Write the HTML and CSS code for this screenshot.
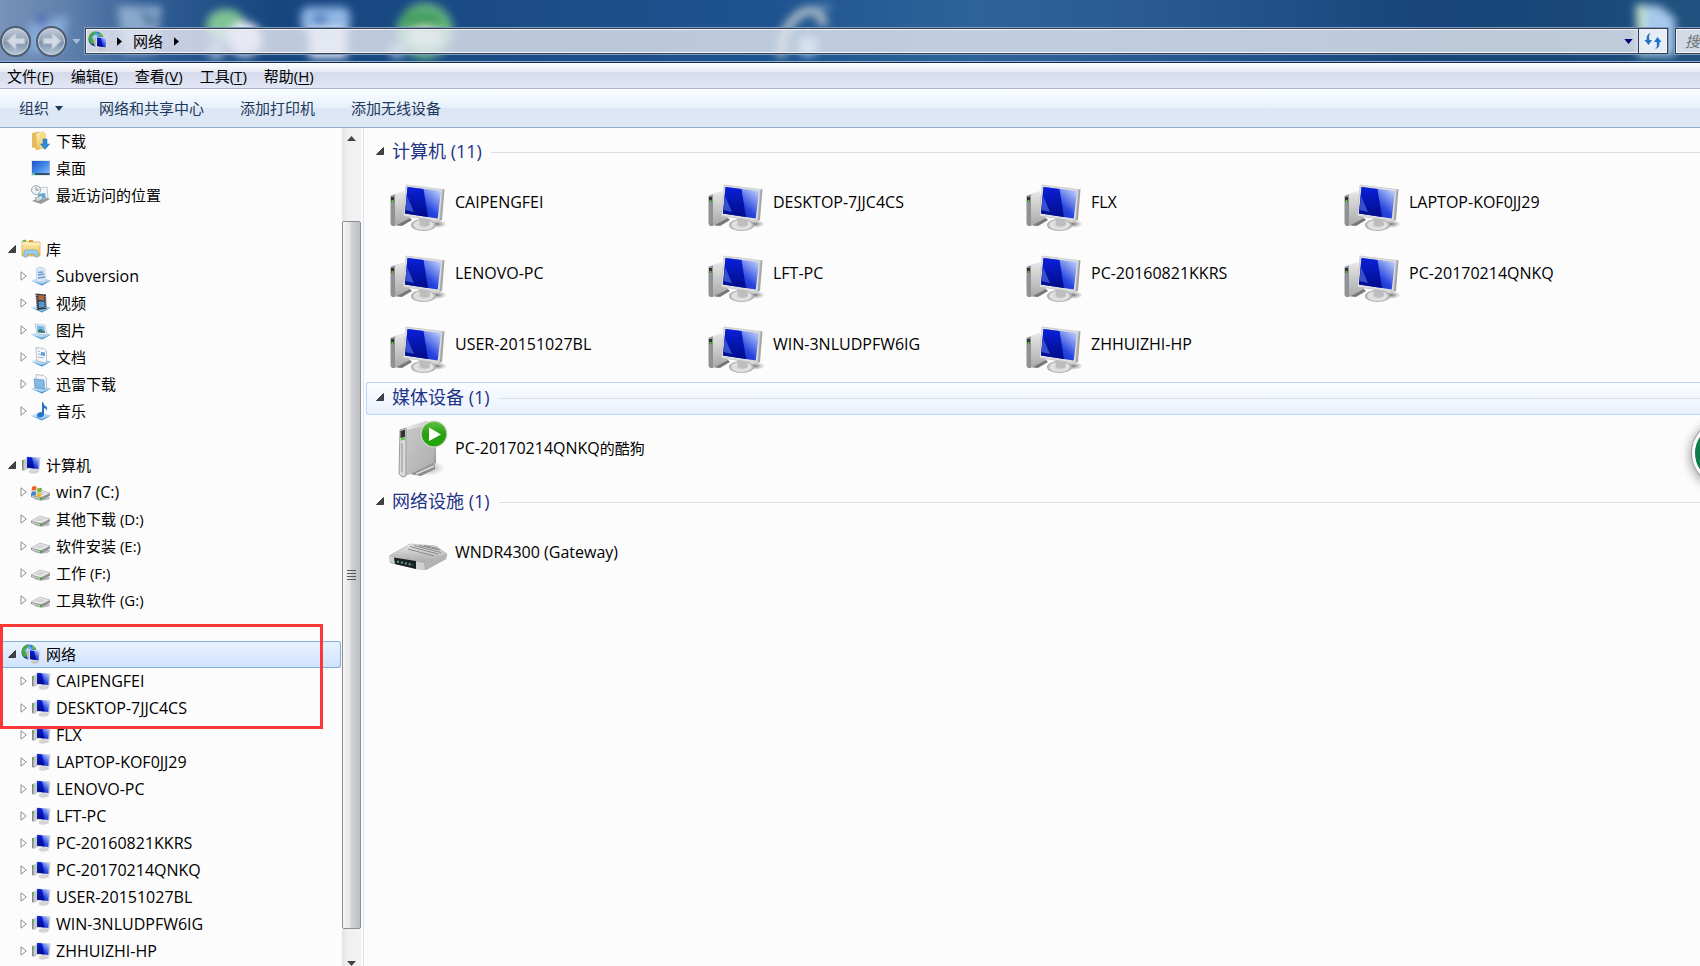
FILE: index.html
```html
<!DOCTYPE html>
<html lang="zh-CN">
<head>
<meta charset="utf-8">
<title>网络</title>
<link rel="stylesheet" href="styles.css">
</head>
<body>
<svg class="defs" aria-hidden="true">
  <defs>
    <linearGradient id="gScreen" x1="0" y1="1" x2="1" y2="0"><stop offset="0" stop-color="#0008a0"/><stop offset=".5" stop-color="#2a48e0"/><stop offset="1" stop-color="#d8e6ff"/></linearGradient>
    <linearGradient id="gDark" x1="0" y1="0" x2="0" y2="1"><stop offset="0" stop-color="#0a20d8"/><stop offset="1" stop-color="#000c88"/></linearGradient>
    <linearGradient id="gMetal" x1="0" y1="0" x2="1" y2="1"><stop offset="0" stop-color="#f4f4f4"/><stop offset="1" stop-color="#8e8e8e"/></linearGradient>
    <linearGradient id="gTower" x1="0" y1="0" x2="0" y2="1"><stop offset="0" stop-color="#e8e8e8"/><stop offset="1" stop-color="#a8a8a8"/></linearGradient>
    <radialGradient id="gStand"><stop offset="0" stop-color="#c8c8c8"/><stop offset=".7" stop-color="#e6e6e6"/><stop offset="1" stop-color="#a0a0a0"/></radialGradient>
    <radialGradient id="gShadow"><stop offset="0" stop-color="#777"/><stop offset="1" stop-color="#999" stop-opacity="0"/></radialGradient>
    <radialGradient id="gGlobe" cx=".4" cy=".35"><stop offset="0" stop-color="#bfe4ff"/><stop offset=".6" stop-color="#3d8ede"/><stop offset="1" stop-color="#1c4f9c"/></radialGradient>
    <linearGradient id="gGreen" x1="0" y1="0" x2="0" y2="1"><stop offset="0" stop-color="#5cc43c"/><stop offset=".5" stop-color="#2a9e12"/><stop offset="1" stop-color="#1fa808"/></linearGradient>
    <linearGradient id="gFolder" x1="0" y1="0" x2="0" y2="1"><stop offset="0" stop-color="#fdf0b8"/><stop offset="1" stop-color="#e8bf58"/></linearGradient>
    <linearGradient id="gDesk" x1="0" y1="0" x2="1" y2="1"><stop offset="0" stop-color="#1f52c4"/><stop offset=".5" stop-color="#3f86e8"/><stop offset="1" stop-color="#8cc0f6"/></linearGradient>
    <linearGradient id="gTray" x1="0" y1="0" x2="1" y2="1"><stop offset="0" stop-color="#e6f4fd"/><stop offset="1" stop-color="#86bde8"/></linearGradient>

    <symbol id="pc" viewBox="0 0 60 60">
      <ellipse cx="49" cy="52" rx="10" ry="4" fill="url(#gShadow)"/>
      <path d="M3 23 16 19 22 47 12 54 4 53z" fill="url(#gTower)"/>
      <path d="M2.500 24 7 22.500 7 54 4 54 2.500 52z" fill="#8f9196"/>
      <path d="M3 25h3v5h-3z" fill="#333"/><path d="M3.500 28h2v2h-2z" fill="#61c83a"/>
      <path d="M9 53 22 46 24 48 14 54z" fill="#777"/>
      <ellipse cx="35.500" cy="53" rx="12.500" ry="6" fill="url(#gStand)"/>
      <path d="M31 45h10l1 8q-5 3-10 0z" fill="#bdbdbd"/>
      <path d="M53 18 56.500 17 54 48 50.500 49z" fill="#a4a4a4"/>
      <path d="M18 13 54.500 17.500 51.500 49 15.500 44z" fill="#e0e0e0" stroke="#bbb" stroke-width=".6"/>
      <path d="M19.500 15 53 19 49.700 46.500 17 41.500z" fill="url(#gScreen)"/>
      <path d="M19.500 15 35.500 17 40 45 17 41.500z" fill="url(#gDark)"/>
      <path d="M19 24 26 40 17.500 38z" fill="#5a78e8" opacity=".6"/>
    </symbol>
    <symbol id="pcs" viewBox="0 0 20 20">
      <ellipse cx="14" cy="16.500" rx="5" ry="2" fill="url(#gShadow)"/>
      <path d="M1 5 6 3.500 8 13 3 16 1 15z" fill="#c9c9c9"/><path d="M1 5h1.500v10.500L1 15z" fill="#84888c"/><path d="M1 6h1.500v2H1z" fill="#42b432"/>
      <ellipse cx="12" cy="16.500" rx="4.200" ry="2.200" fill="#d5d5d5"/>
      <path d="M5.500 1.500 19.500 2.500 18.500 15 5 13.500z" fill="#c9ccd4"/>
      <path d="M6.300 2 18.300 3 17.300 14 6 12.500z" fill="url(#gScreen)"/>
      <path d="M6.300 2 11 2.500 13.500 13.500 6 12.500z" fill="url(#gDark)"/>
    </symbol>
    <symbol id="net" viewBox="0 0 20 20">
      <circle cx="8" cy="8" r="7.600" fill="url(#gGlobe)"/>
      <path d="M1 5q3-5 6-4.500Q8 3 5 5t1 4-2 4Q0 10 1 5z" fill="#4aa83a"/><path d="M11 1q4 2 4.500 5l-4-1z" fill="#69b94e"/>
      <path d="M5 8 8 7 10 15 7 16z" fill="#bbb"/>
      <ellipse cx="14" cy="18" rx="4" ry="1.800" fill="#c8c8c8"/>
      <path d="M8 5.500 19.500 6.500 18.500 17.500 8 16z" fill="#d8dade"/>
      <path d="M9 6.500 18.500 7.300 17.500 16.500 9 15z" fill="url(#gScreen)"/><path d="M9 6.500 13 7 15 16 9 15z" fill="url(#gDark)"/>
    </symbol>
    <symbol id="download" viewBox="0 0 20 20">
      <path d="M1 2 8 .5 9 18 1 16.500z" fill="#e6bd5c"/><path d="M5 2 13 1V17L5 19z" fill="url(#gFolder)" stroke="#d8ae4c" stroke-width=".5"/><path d="M9 3 15 2V15L9 18z" fill="#f5d784"/>
      <path d="M12 8h4v5h2.500L14 18.500 9.500 13H12z" fill="#2e8ae0" stroke="#1664b4" stroke-width=".5"/>
    </symbol>
    <symbol id="desk" viewBox="0 0 20 20"><path d="M.5 2.500h18.500v15H.5z" fill="#c2d0dc"/><path d="M1 3h17.500v13H1z" fill="url(#gDesk)"/><path d="M1 15h17.500v2H1z" fill="#34506e"/><path d="M1 15h3v2H1z" fill="#4fc0a0"/></symbol>
    <symbol id="recent" viewBox="0 0 20 20">
      <path d="M1 16 12 11 19 14 10 19z" fill="#999"/><path d="M6 3 16 2 17 13 8 15z" fill="#f2f5f8" stroke="#a6acb2" stroke-width=".7"/>
      <path d="M7 9 14 8 15 13 8 14z" fill="#5dacd8"/><path d="M4 13 11 10 12 14 6 17z" fill="#c8dce4" stroke="#777" stroke-width=".5"/>
      <circle cx="5" cy="5" r="4.500" fill="#edf1f5" stroke="#9ba7b3"/><path d="M5 2v3h3" fill="none" stroke="#697684" stroke-width=".8"/>
    </symbol>
    <symbol id="library" viewBox="0 0 20 20">
      <path d="M1 2h5l1 1h12v14H1z" fill="url(#gFolder)" stroke="#d3a94a" stroke-width=".7"/><path d="M2 .8h3v2H2z" fill="#60b848"/><path d="M8 1h4v2H8z" fill="#d99a3c"/><path d="M1 5h18" stroke="#fff3c4"/>
      <path d="M3 18v-4q0-3 3-3h8q3 0 3 3v4h-3v-3H6v3z" fill="#9fd0f2" stroke="#5a9fd4" stroke-width=".6"/>
    </symbol>
    <symbol id="tray" viewBox="0 0 20 20"><path d="M0 14.500 8 11 20 14.500 11 19.500z" fill="url(#gTray)"/><path d="M0 14.500 11 18 20 14.500 11 19.500z" fill="#4d9ad2"/></symbol>
    <symbol id="libdoc" viewBox="0 0 20 20"><use href="#tray"/><path d="M5 5q0-4 4-4 5 0 5 4l1 10-9 1z" fill="#d9e6f6" stroke="#b5c8e0" stroke-width=".6"/><path d="M7 6.500 12 6M7 9l6-1M7 12l7-1" stroke="#6f9bd2" stroke-width="1.300"/></symbol>
    <symbol id="video" viewBox="0 0 20 20"><use href="#tray"/><path d="M4.500.5 15 1.500 15.500 16 6 17z" fill="#35393f"/><path d="M7.500 2 13 2.500V7.500l-5.500-.5z" fill="#b4683a"/><path d="M7.500 8.500 13 8.500 13.500 14 8 15z" fill="#5595d4"/><path d="M5.800 2v14M14.200 3v12" stroke="#d9dde2" stroke-width="1" stroke-dasharray="1 1.200"/></symbol>
    <symbol id="picture" viewBox="0 0 20 20"><use href="#tray"/><path d="M4 4 14 5 16 15 6 14z" fill="#eff5f9" stroke="#9fb4c6" stroke-width=".6"/><path d="M5.500 5.500 13 6.200 14.300 13 7 12.500z" fill="#72b8e8"/><path d="M6.500 10 10 9l4 3v1l-7-.5z" fill="#3c7a78"/></symbol>
    <symbol id="docs" viewBox="0 0 20 20"><use href="#tray"/><path d="M5 .5 13 1.500 15.500 4 15.500 16 6 14z" fill="#f5f8fb" stroke="#9eabba" stroke-width=".7"/><path d="M7 4l2 .5M7 7l3 .5M7 10l6 1" stroke="#9fb2c8"/><path d="M10 5 14 5.500V9l-4-.5z" fill="#5d9fd6"/></symbol>
    <symbol id="thunder" viewBox="0 0 20 20"><use href="#tray"/><path d="M5 .5 13 1.500 15.500 4 15.500 15 5 14z" fill="#f0f4f8" stroke="#9eabba" stroke-width=".7"/><path d="M3 5 13 6 13.500 15 4 14z" fill="#7fb9e4" stroke="#4f8fc4" stroke-width=".6"/></symbol>
    <symbol id="music" viewBox="0 0 20 20"><use href="#tray"/><path d="M12 1q1 4 4 5v4q-1-3-3-3v6.500q-.5 3-4 3T6 14t4-3l1 .2V1z" fill="#2377c6"/></symbol>
    <symbol id="drive" viewBox="0 0 20 20"><ellipse cx="11" cy="15" rx="8" ry="2.500" fill="#bbb"/><path d="M0 12 9 7 19 10 19 12.500 10 17.500 0 14z" fill="#8c8e90"/><path d="M0 12 9 7 19 10 10 14.500z" fill="#eceded" stroke="#a7a7a7" stroke-width=".5"/><path d="M3 11.500 9 8.500l6 1.500-5 2.500z" fill="#d2d4d5"/><path d="M1 12.800 9 15.200V16.500L1 14z" fill="#ccc"/><path d="M9 14.500h2v2.500H9z" fill="#36b82e"/></symbol>
    <symbol id="windrive" viewBox="0 0 20 20"><use href="#drive" y="1"/><path d="M1 5q3-2 4.500 0L5 9Q3 7.500.5 9z" fill="#e8642c"/><path d="M6.500 5.500q2 1.500 4.500 0L10.500 9.500Q8 11 6 9.500z" fill="#72b63c"/><path d="M.5 10q2.500-1.500 4.500 0L4.500 14Q2.500 12.500 0 14z" fill="#3a86d0"/><path d="M6 10.500q2.500 1.500 4.500 0L10 14.500Q8 16 5.500 14.500z" fill="#f3b92c"/></symbol>
    <symbol id="media" viewBox="0 0 60 60">
      <ellipse cx="40" cy="50" rx="17" ry="8" fill="url(#gShadow)" opacity=".7"/>
      <path d="M22 56 44 44 47 47 47 51 33 58z" fill="#8d8d8d"/><path d="M28 56 46 48" stroke="#ddd" stroke-width="1.500"/>
      <path d="M18 9 38 3 48 6 48 45 20 57 16 57z" fill="url(#gMetal)"/>
      <path d="M18 12 48 6 46 44 20 56z" fill="#b9b9b9" opacity=".7"/>
      <path d="M12 12 18 10 18 58 14 59 11 56z" fill="#dadada" stroke="#888" stroke-width=".8"/>
      <path d="M12.500 13 17 11.500V19l-4.500 1z" fill="#333"/><path d="M13 20.500 17 19.500v2l-4 1z" fill="#46cf28"/><path d="M14 25v29" stroke="#909090"/>
      <circle cx="46" cy="16" r="13.500" fill="#d4d4d4"/><circle cx="46" cy="16" r="12.300" fill="url(#gGreen)"/><path d="M41 9.500 53 16.500 41 23z" fill="#fff"/>
    </symbol>
    <symbol id="router" viewBox="0 0 60 60">
      <path d="M1 34 22 22 48 24 59 32 58 37 38 48 28 47 2 41z" fill="#a4a6a8"/>
      <path d="M1 34 22 22 48 24 59 32 36 41z" fill="url(#gTower)" stroke="#bbb" stroke-width=".6"/>
      <path d="M22 24.500 50 32M26 23.500 53 30.500M20 27 46 34M31 23.500 52 28M36 23.500 50 26.500" stroke="#85888a" stroke-width="1"/>
      <path d="M1 34 36 41 37 48 28 47 2 40z" fill="#cfd1d2"/><path d="M36 41 59 32 58 37 38 48z" fill="#b1b3b4"/>
      <path d="M6 35.500 28 39V47L7 42z" fill="#192024"/><path d="M9 39.500 25 43" stroke="#5fa87a" stroke-width="2" stroke-dasharray="2 2"/>
    </symbol>
    <symbol id="open" viewBox="0 0 8 8"><path d="M7.500.5V7.500H.5z" fill="#444" stroke="#222" stroke-width=".8"/></symbol>
    <symbol id="shut" viewBox="0 0 8 10"><path d="M1 .8 6.200 5 1 9.200z" fill="#fff" stroke="#8e8e8e"/></symbol>
  </defs>
</svg>

<header class="titlebar">
  <svg class="wallpaper" aria-hidden="true">
    <defs><filter id="soft" x="-20%" y="-20%" width="140%" height="140%"><feGaussianBlur stdDeviation="4"/></filter></defs>
    <g filter="url(#soft)">
      <path d="M28 24 68 16 62 50 30 54z" fill="#86abd8"/><circle cx="42" cy="21" r="5" fill="#4a57b8"/>
      <path d="M117 6H162L155 54H124z" fill="#8aa9cc"/><path d="M138 10 158 18 150 28z" fill="#4c6f98"/>
      <ellipse cx="226" cy="25" rx="20" ry="16" fill="#7fc394"/><circle cx="245" cy="39" r="17" fill="#e8eefa"/><circle cx="216" cy="51" r="9" fill="#8aa8cc"/>
      <rect x="301" y="7" width="49" height="26" rx="8" fill="#8fb6e4"/><circle cx="320" cy="20" r="7" fill="#4f82bf"/><rect x="309" y="28" width="38" height="30" fill="#e0ebfa"/>
      <circle cx="425" cy="31" r="28" fill="#6ab987"/><ellipse cx="422" cy="20" rx="22" ry="11" fill="#46a062"/><ellipse cx="425" cy="37" rx="17" ry="10" fill="#d4f0d8"/><circle cx="397" cy="51" r="8" fill="#8aa8cc"/>
      <path d="M782 57Q778 32 800 14 820 4 824 26" fill="none" stroke="#a9b9c6" stroke-width="9"/><path d="M815 8 832 6" stroke="#5f88b2" stroke-width="5"/><circle cx="808" cy="46" r="10" fill="#a8d2f0"/>
      <path d="M1636 4 1660 6 1675 18V56H1638z" fill="#a6c9ec"/><path d="M1636 4 1646 6V56H1638z" fill="#c3e0cc"/>
    </g>
  </svg>
  <div class="nav">
    <button class="round" aria-label="后退"><svg viewBox="0 0 20 20"><path d="M10 2 2 10 10 18V12.500H18V7.500H10z"/></svg></button>
    <button class="round" aria-label="前进"><svg viewBox="0 0 20 20"><path d="M10 2 18 10 10 18V12.500H2V7.500H10z"/></svg></button>
    <button class="recent" aria-label="最近的页面"><svg viewBox="0 0 10 6"><path d="M0 0H10L5 6z"/></svg></button>
  </div>
  <div class="address">
    <svg class="icon"><use href="#net"/></svg>
    <svg class="sep" viewBox="0 0 6 10"><path d="M0 0 6 5 0 10z"/></svg>
    <a href="#">网络</a>
    <svg class="sep" viewBox="0 0 6 10"><path d="M0 0 6 5 0 10z"/></svg>
    <button class="history" aria-label="历史记录"><svg viewBox="0 0 10 6"><path d="M0 0H10L5 6z"/></svg></button>
    <button class="refresh" aria-label="刷新"><svg viewBox="0 0 18 18"><path d="M7 1Q4 3 5.500 8H8L4.500 13 .5 8H2.500Q2 2 7 1z"/><path d="M11 17Q14 15 12.500 10H10L13.500 5 17.500 10H15.500Q16 16 11 17z"/></svg></button>
  </div>
  <input class="search" type="text" placeholder="搜" aria-label="搜索">
</header>

<nav class="menubar">
  <button>文件(<u>F</u>)</button><button>编辑(<u>E</u>)</button><button>查看(<u>V</u>)</button><button>工具(<u>T</u>)</button><button>帮助(<u>H</u>)</button>
</nav>
<div class="toolbar">
  <button>组织<svg viewBox="0 0 8 5"><path d="M0 0H8L4 5z"/></svg></button><button>网络和共享中心</button><button>添加打印机</button><button>添加无线设备</button>
</div>

<div class="body">
  <nav class="tree">
    <ul>
      <li class="sub"><a href="#"><svg><use href="#download"/></svg>下载</a></li>
      <li class="sub"><a href="#"><svg><use href="#desk"/></svg>桌面</a></li>
      <li class="sub"><a href="#"><svg><use href="#recent"/></svg>最近访问的位置</a></li>
    </ul>
    <ul>
      <li><button aria-label="折叠"><svg><use href="#open"/></svg></button><a href="#"><svg><use href="#library"/></svg>库</a></li>
      <li class="sub latin"><button aria-label="展开"><svg><use href="#shut"/></svg></button><a href="#"><svg><use href="#libdoc"/></svg>Subversion</a></li>
      <li class="sub"><button aria-label="展开"><svg><use href="#shut"/></svg></button><a href="#"><svg><use href="#video"/></svg>视频</a></li>
      <li class="sub"><button aria-label="展开"><svg><use href="#shut"/></svg></button><a href="#"><svg><use href="#picture"/></svg>图片</a></li>
      <li class="sub"><button aria-label="展开"><svg><use href="#shut"/></svg></button><a href="#"><svg><use href="#docs"/></svg>文档</a></li>
      <li class="sub"><button aria-label="展开"><svg><use href="#shut"/></svg></button><a href="#"><svg><use href="#thunder"/></svg>迅雷下载</a></li>
      <li class="sub"><button aria-label="展开"><svg><use href="#shut"/></svg></button><a href="#"><svg><use href="#music"/></svg>音乐</a></li>
    </ul>
    <ul>
      <li><button aria-label="折叠"><svg><use href="#open"/></svg></button><a href="#"><svg><use href="#pcs"/></svg>计算机</a></li>
      <li class="sub latin"><button aria-label="展开"><svg><use href="#shut"/></svg></button><a href="#"><svg><use href="#windrive"/></svg>win7 (C:)</a></li>
      <li class="sub"><button aria-label="展开"><svg><use href="#shut"/></svg></button><a href="#"><svg><use href="#drive"/></svg>其他下载 (D:)</a></li>
      <li class="sub"><button aria-label="展开"><svg><use href="#shut"/></svg></button><a href="#"><svg><use href="#drive"/></svg>软件安装 (E:)</a></li>
      <li class="sub"><button aria-label="展开"><svg><use href="#shut"/></svg></button><a href="#"><svg><use href="#drive"/></svg>工作 (F:)</a></li>
      <li class="sub"><button aria-label="展开"><svg><use href="#shut"/></svg></button><a href="#"><svg><use href="#drive"/></svg>工具软件 (G:)</a></li>
    </ul>
    <ul class="network">
      <li class="selected"><button aria-label="折叠"><svg><use href="#open"/></svg></button><a href="#"><svg><use href="#net"/></svg>网络</a></li>
      <li class="sub latin"><button aria-label="展开"><svg><use href="#shut"/></svg></button><a href="#"><svg><use href="#pcs"/></svg>CAIPENGFEI</a></li>
      <li class="sub latin"><button aria-label="展开"><svg><use href="#shut"/></svg></button><a href="#"><svg><use href="#pcs"/></svg>DESKTOP-7JJC4CS</a></li>
      <li class="sub latin"><button aria-label="展开"><svg><use href="#shut"/></svg></button><a href="#"><svg><use href="#pcs"/></svg>FLX</a></li>
      <li class="sub latin"><button aria-label="展开"><svg><use href="#shut"/></svg></button><a href="#"><svg><use href="#pcs"/></svg>LAPTOP-KOF0JJ29</a></li>
      <li class="sub latin"><button aria-label="展开"><svg><use href="#shut"/></svg></button><a href="#"><svg><use href="#pcs"/></svg>LENOVO-PC</a></li>
      <li class="sub latin"><button aria-label="展开"><svg><use href="#shut"/></svg></button><a href="#"><svg><use href="#pcs"/></svg>LFT-PC</a></li>
      <li class="sub latin"><button aria-label="展开"><svg><use href="#shut"/></svg></button><a href="#"><svg><use href="#pcs"/></svg>PC-20160821KKRS</a></li>
      <li class="sub latin"><button aria-label="展开"><svg><use href="#shut"/></svg></button><a href="#"><svg><use href="#pcs"/></svg>PC-20170214QNKQ</a></li>
      <li class="sub latin"><button aria-label="展开"><svg><use href="#shut"/></svg></button><a href="#"><svg><use href="#pcs"/></svg>USER-20151027BL</a></li>
      <li class="sub latin"><button aria-label="展开"><svg><use href="#shut"/></svg></button><a href="#"><svg><use href="#pcs"/></svg>WIN-3NLUDPFW6IG</a></li>
      <li class="sub latin"><button aria-label="展开"><svg><use href="#shut"/></svg></button><a href="#"><svg><use href="#pcs"/></svg>ZHHUIZHI-HP</a></li>
      <li class="marker" aria-hidden="true"></li>
    </ul>
  </nav>
  <div class="scrollbar" aria-hidden="true">
    <div class="track"><svg viewBox="0 0 9 5"><path d="M0 5 4.500 0 9 5z"/></svg></div>
    <div class="thumb"><i></i><i></i><i></i><i></i></div>
    <div class="track end"><svg viewBox="0 0 9 5"><path d="M0 0H9L4.500 5z"/></svg></div>
  </div>
  <main>
    <section>
      <h2><button><svg><use href="#open"/></svg>计算机 (11)</button></h2>
      <div class="tiles">
        <a href="#"><svg><use href="#pc"/></svg>CAIPENGFEI</a>
        <a href="#"><svg><use href="#pc"/></svg>DESKTOP-7JJC4CS</a>
        <a href="#"><svg><use href="#pc"/></svg>FLX</a>
        <a href="#"><svg><use href="#pc"/></svg>LAPTOP-KOF0JJ29</a>
        <a href="#"><svg><use href="#pc"/></svg>LENOVO-PC</a>
        <a href="#"><svg><use href="#pc"/></svg>LFT-PC</a>
        <a href="#"><svg><use href="#pc"/></svg>PC-20160821KKRS</a>
        <a href="#"><svg><use href="#pc"/></svg>PC-20170214QNKQ</a>
        <a href="#"><svg><use href="#pc"/></svg>USER-20151027BL</a>
        <a href="#"><svg><use href="#pc"/></svg>WIN-3NLUDPFW6IG</a>
        <a href="#"><svg><use href="#pc"/></svg>ZHHUIZHI-HP</a>
      </div>
    </section>
    <section>
      <h2 class="hover"><button><svg><use href="#open"/></svg>媒体设备 (1)</button></h2>
      <div class="tiles"><a href="#"><svg><use href="#media"/></svg><span>PC-20170214QNKQ<span class="cjk">的酷狗</span></span></a></div>
    </section>
    <section>
      <h2><button><svg><use href="#open"/></svg>网络设施 (1)</button></h2>
      <div class="tiles"><a href="#"><svg><use href="#router"/></svg>WNDR4300 (Gateway)</a></div>
    </section>
  </main>
</div>
<div class="bubble" aria-hidden="true"></div>
</body>
</html>
```

FILE: styles.css
```css
* { box-sizing: border-box; }

body {
  margin: 0;
  height: 100vh;
  overflow: hidden;
  position: relative;
  display: flex;
  flex-direction: column;
  background: #fcfcfc;
  color: #000;
  font: 15px/20px "Open Sans", "Noto Sans CJK SC", sans-serif;
}

button, input { font: inherit; color: inherit; }
button { border: 0; padding: 0; background: none; white-space: nowrap; }
a { color: inherit; text-decoration: none; white-space: nowrap; }
svg { display: block; flex: none; }
ul { list-style: none; margin: 0; padding: 0; }
.defs { position: absolute; width: 0; height: 0; }

/* Title bar */
.titlebar {
  position: relative;
  flex: none;
  height: 63px;
  padding-top: 20px;
  display: flex;
  align-items: center;
  overflow: hidden;
  background: linear-gradient(90deg, #7892b8 0, #5f80ad 4%, #2f5c93 9%, #17467f 16%, #1c4d88 32%, #1e538f 45%, #2e6399 57%, #2a5c92 66%, #17457a 84%, #184778 92%, #22527f 100%);
  border-bottom: 1px solid #12294a;
  box-shadow: inset 0 -1px #8fb0d4;
}
.wallpaper { position: absolute; left: 0; top: 0; width: 100%; height: 100%; }
.nav { position: relative; display: flex; align-items: center; gap: 5px; width: 85px; }
.round {
  width: 31px;
  height: 31px;
  border-radius: 50%;
  border: 2px solid #4e5d71;
  background: linear-gradient(#c5cedb, #8d9db3 50%, #7a8fab 51%, #b9c8da);
  box-shadow: inset 0 0 0 1px #ccd5e0;
  display: grid;
  place-items: center;
}
.round svg { width: 22px; height: 22px; fill: #d3dae4; stroke: #b3bfce; stroke-width: 1; }
.recent svg { width: 9px; height: 5px; fill: #a9bdd6; }
.address {
  position: relative;
  flex: 1;
  height: 26px;
  display: flex;
  align-items: center;
  border: 1px solid #343f50;
  box-shadow: inset 0 0 0 1px #f2f5fa, 0 0 0 1px #7f9dc0;
  background: linear-gradient(90deg, rgba(232, 233, 243, .82), rgba(226, 230, 238, .8) 30%, rgba(226, 232, 240, .82));
}
.address .icon { width: 20px; height: 20px; margin: 0 9px 0 2px; }
.address .sep { width: 5px; height: 9px; margin-right: 11px; }
.address a { margin-right: 11px; }
.history { margin-left: auto; width: 20px; height: 24px; display: grid; place-items: center; }
.history svg { width: 9px; height: 5px; fill: #000080; }
.refresh { width: 29px; height: 24px; display: grid; place-items: center; border-left: 1px solid #343f50; background: rgba(240, 244, 252, .6); }
.refresh svg { width: 18px; height: 18px; fill: #2573c4; }
.search {
  position: relative;
  flex: none;
  width: 25px;
  height: 26px;
  margin-left: 7px;
  padding: 0 0 0 9px;
  border: 1px solid #343f50;
  border-right: 0;
  border-radius: 0;
  outline: 0;
  background: #d2dae5;
  box-shadow: inset 1px 1px #f2f5fa, inset 0 -1px #f2f5fa, 0 0 0 1px #7f9dc0;
  font-style: italic;
}
.search::placeholder { color: #6d7075; opacity: 1; }

/* Menu and command bars */
.menubar {
  flex: none;
  height: 26px;
  padding: 0 7px;
  display: flex;
  gap: 17px;
  background: linear-gradient(#fff, #e8ebf4 35%, #d5daec 36%, #e2e6f5);
  border-bottom: 1px solid #a9b6ca;
}
.menubar u { text-underline-offset: 2px; }
.toolbar {
  flex: none;
  height: 39px;
  padding: 0 19px;
  display: flex;
  gap: 36px;
  color: #1e395b;
  background: linear-gradient(#fbfdff, #e6f0fb 49%, #dce6f4 50%, #dde8f6);
  border-bottom: 1px solid #94aeca;
}
.toolbar button { display: flex; align-items: center; }
.toolbar svg { width: 8px; height: 5px; margin-left: 6px; fill: #1e395b; }

.body { flex: 1; min-height: 0; display: flex; }

/* Folder tree */
.tree { flex: none; width: 342px; overflow: hidden; }
.tree ul + ul { margin-top: 27px; }
.tree li { display: flex; align-items: center; height: 27px; padding: 0 0 2px 8px; border: 1px solid transparent; border-left: 0; }
.tree li.sub { padding-left: 20px; }
.tree li button { width: 13px; }
.tree li.sub button { width: 11px; }
.tree li.sub > a:first-child { margin-left: 11px; }
.tree button svg { width: 8px; height: 8px; }
.tree .sub button svg { height: 10px; }
.tree a { display: flex; align-items: center; gap: 5px; }
.tree a svg { width: 20px; height: 20px; }
.tree .selected { border-color: #84acdd; border-radius: 0 3px 3px 0; margin-right: 1px; background: linear-gradient(#eaf3fe, #cfe3ff); }
.latin { font-size: 16px; }
.network { position: relative; }
.tree .network .marker { position: absolute; left: 0; top: -17px; width: 323px; height: 105px; border: 3px solid #fa3838; }

/* Scroll bar */
.scrollbar {
  flex: none;
  width: 22px;
  padding-right: 2px;
  border-right: 1px solid #d6e5f5;
  display: grid;
  grid-template-rows: 93fr 708fr 37fr;
}
.track { display: flex; justify-content: center; padding-top: 8px; background: linear-gradient(90deg, #e4e4e4, #f0f0f0 30%, #f2f2f2); }
.track.end { align-items: flex-end; padding: 0; }
.track svg { width: 9px; height: 5px; fill: #444; }
.thumb {
  display: flex;
  flex-direction: column;
  align-items: center;
  justify-content: center;
  gap: 2px;
  border: 1px solid #8e8e8e;
  border-radius: 2px;
  background: linear-gradient(90deg, #f6f6f6, #e6e7e8 40%, #d0d2d4 50%, #bcbec2);
}
.thumb i { width: 9px; height: 1px; background: #555; }

/* Contents */
main { flex: 1; min-width: 0; padding: 8px 0 0 2px; overflow: hidden; }
h2 { margin: 0; height: 33px; display: flex; align-items: center; gap: 9px; border: 1px solid transparent; border-right: 0; font-weight: 400; }
h2::after { content: ""; flex: 1; height: 1px; background: #dcdfe3; }
h2 button { display: flex; align-items: center; gap: 8px; padding: 0 0 3px 9px; font-size: 18px; line-height: 24px; color: #1e3287; }
h2 svg { width: 8px; height: 8px; }
h2.hover { border-color: #b8d6fb; border-radius: 3px 0 0 3px; background: linear-gradient(#fafcfe, #e9f2fd); }
.tiles { display: grid; grid-template-columns: repeat(auto-fill, 318px); grid-auto-rows: 71px; padding-left: 22px; font-size: 16px; }
.tiles a { display: flex; align-items: center; gap: 7px; height: 66px; }
.tiles svg { width: 60px; height: 60px; }
.cjk { font-size: 15px; }

.bubble {
  position: absolute;
  right: -56px;
  top: 421px;
  width: 64px;
  height: 64px;
  border-radius: 50%;
  border: 3px solid #fff;
  background: #107c4c;
  box-shadow: 0 0 0 1px #a2a2a2, 0 2px 10px 3px rgba(0, 0, 0, .3);
}
```
